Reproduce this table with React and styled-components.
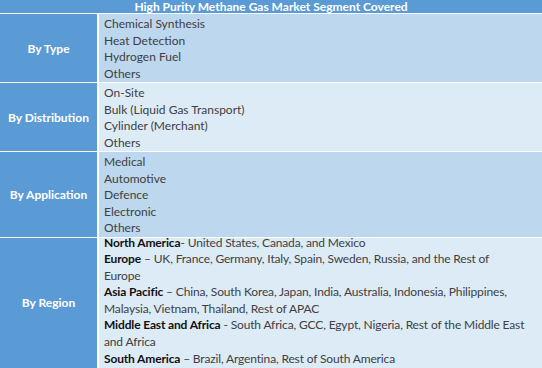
import styled, { createGlobalStyle } from "styled-components"

const GlobalStyle = createGlobalStyle`
  html, body {
    margin: 0;
    padding: 0;
    background: #fff;
  }
  body {
    font-family: Lato, "Liberation Sans", sans-serif;
  }
`

const Table = styled.div`
  width: 542px;
  height: 368px;
  overflow: hidden;
  display: flex;
  flex-direction: column;
  gap: 1px;
  background: #fff;
`

const Title = styled.div`
  flex-shrink: 0;
  height: 13px;
  background: #5b9bd5;
  color: #fff;
  font-weight: 700;
  font-size: 12px;
  line-height: 13px;
  text-align: center;
`

const Row = styled.div`
  flex: ${(p) => (p.$fill ? "1 0 auto" : "0 0 auto")};
  display: grid;
  grid-template-columns: 97px 1fr;
  column-gap: 2px;
`

const Label = styled.div`
  background: #5b9bd5;
  color: #fff;
  font-weight: 700;
  font-size: 12px;
  display: flex;
  align-items: center;
  justify-content: center;
`

const Cell = styled.div`
  background: ${(p) => (p.$alt ? "#ddebf7" : "#bdd7ee")};
  padding: 2px ${(p) => p.$right || 6}px 0 5px;
  color: #404040;
  font-size: 12px;
  line-height: 16.5px;
`

// region text sits higher in its cell and runs a little tighter
const RegionList = styled.div`
  margin-top: -5px;
  line-height: 16.6px;
  letter-spacing: -0.15px;
`

const Line = styled.div`
  white-space: ${(p) => (p.$wrap ? "normal" : "nowrap")};
`

const Strong = styled.b`
  color: #111;
  font-weight: 700;
`

const rows = [
  {
    label: "By Type",
    items: ["Chemical Synthesis", "Heat Detection", "Hydrogen Fuel", "Others"],
  },
  {
    label: "By Distribution",
    alt: true,
    items: ["On-Site", "Bulk (Liquid Gas Transport)", "Cylinder (Merchant)", "Others"],
  },
  {
    label: "By Application",
    items: ["Medical", "Automotive", "Defence", "Electronic", "Others"],
  },
]

const regions = [
  ["North America", "- United States, Canada, and Mexico"],
  ["Europe", " – UK, France, Germany, Italy, Spain, Sweden, Russia, and the Rest of Europe"],
  ["Asia Pacific", " – China, South Korea, Japan, India, Australia, Indonesia, Philippines, Malaysia, Vietnam, Thailand, Rest of APAC"],
  ["Middle East and Africa", " - South Africa, GCC, Egypt, Nigeria, Rest of the Middle East and Africa"],
  ["South America", " – Brazil, Argentina, Rest of South America"],
]

export default function App() {
  return (
    <>
      <GlobalStyle />
      <Table>
        <Title>High Purity Methane Gas Market Segment Covered</Title>
        {rows.map((r) => (
          <Row key={r.label}>
            <Label>{r.label}</Label>
            <Cell $alt={r.alt}>
              {r.items.map((it) => (
                <Line key={it}>{it}</Line>
              ))}
            </Cell>
          </Row>
        ))}
        <Row $fill>
          <Label>By Region</Label>
          <Cell $alt $right={16}>
            <RegionList>
              {regions.map(([b, t]) => (
                <Line key={b} $wrap>
                  <Strong>{b}</Strong>
                  {t}
                </Line>
              ))}
            </RegionList>
          </Cell>
        </Row>
      </Table>
    </>
  )
}
